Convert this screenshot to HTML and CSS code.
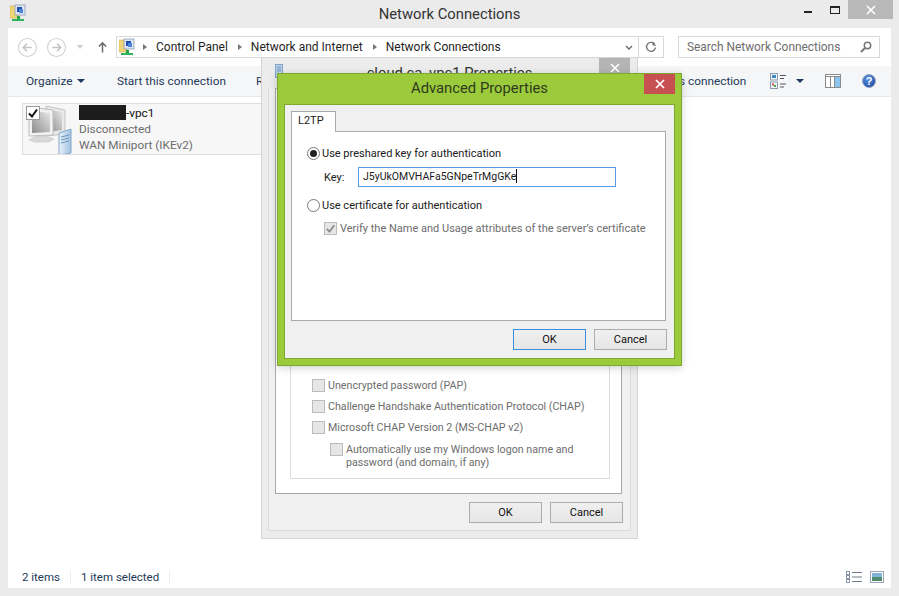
FILE: index.html
```html
<!DOCTYPE html>
<html lang="en">
<head>
<meta charset="utf-8">
<title>Network Connections</title>
<link rel="stylesheet" href="styles.css">
</head>
<body>
<svg class="defs" width="0" height="0" aria-hidden="true">
  <defs>
    <linearGradient id="screen" x1="0" y1="1" x2="1" y2="0"><stop offset="0" stop-color="#8c8c8c"/><stop offset="1" stop-color="#e8e8e8"/></linearGradient>
    <linearGradient id="server" x1="0" y1="0" x2="1" y2="0"><stop offset="0" stop-color="#eaf3fb"/><stop offset="1" stop-color="#9fc1e2"/></linearGradient>
    <radialGradient id="helpball" cx=".4" cy=".3" r=".8"><stop offset="0" stop-color="#5c93e6"/><stop offset="1" stop-color="#1d46a0"/></radialGradient>
    <symbol id="netfolder" viewBox="0 0 16 18">
      <path d="M0 2h5l1 1h2v11H0z" fill="#f1d675" stroke="#c9a94a" stroke-width=".6"/>
      <rect x="5" y="1" width="10" height="10" fill="#dfe6f3" stroke="#7f8fb0" stroke-width=".7"/>
      <rect x="7" y="3" width="5" height="5" fill="#1f4fa8"/>
      <rect x="9" y="5" width="4" height="4" fill="#4d87d8"/>
      <rect x="7" y="12" width="3" height="3" fill="#1fa34a"/>
      <rect x="2" y="15" width="12" height="2" fill="#2eb35a"/>
    </symbol>
    <symbol id="x" viewBox="0 0 10 10">
      <path d="M1 1l8 8M9 1l-8 8" stroke="currentColor" stroke-width="1.7" fill="none"/>
    </symbol>
    <symbol id="tick" viewBox="0 0 12 12">
      <path d="M2 6.5l3 3 5-7" stroke="currentColor" stroke-width="2" fill="none"/>
    </symbol>
  </defs>
</svg>

<div class="window">
  <header class="titlebar">
    <svg class="app-icon"><use href="#netfolder"/></svg>
    <h1 class="title">Network Connections</h1>
    <div class="caption">
      <span class="cap-min"></span>
      <span class="cap-max"></span>
      <span class="cap-close"><svg class="x-icon"><use href="#x"/></svg></span>
    </div>
  </header>

  <main class="client">
    <div class="addressrow">
      <span class="nav-btn"><svg viewBox="0 0 18 18"><circle cx="9" cy="9" r="8.5" fill="#fff" stroke="#cfcfcf"/><path d="M13 9H5M8.500 5.500L5 9l3.500 3.500" stroke="#c4c4c4" stroke-width="1.500" fill="none"/></svg></span>
      <span class="nav-btn"><svg viewBox="0 0 18 18"><circle cx="9" cy="9" r="8.500" fill="#fff" stroke="#cfcfcf"/><path d="M5 9h8M9.500 5.500L13 9l-3.500 3.500" stroke="#c4c4c4" stroke-width="1.500" fill="none"/></svg></span>
      <span class="nav-drop"></span>
      <span class="nav-up"><svg viewBox="0 0 10 12"><path d="M5 12V2M1 5.500L5 1.500l4 4" stroke="#6d6d6d" stroke-width="1.700" fill="none"/></svg></span>
      <div class="address">
        <svg class="addr-icon"><use href="#netfolder"/></svg>
        <span class="crumb-sep"></span><span class="crumb">Control Panel</span>
        <span class="crumb-sep"></span><span class="crumb">Network and Internet</span>
        <span class="crumb-sep"></span><span class="crumb">Network Connections</span>
        <span class="addr-chevron"><svg viewBox="0 0 8 6"><path d="M1 1l3 3 3-3" stroke="#666" stroke-width="1.400" fill="none"/></svg></span>
        <span class="addr-refresh"><svg viewBox="0 0 12 12"><path d="M9.700 3.200A4.500 4.500 0 1 0 10.500 6.500" stroke="#777" stroke-width="1.400" fill="none"/><path d="M7.500 0.500v4h4z" fill="#777" transform="rotate(10 9 3)"/></svg></span>
      </div>
      <div class="search">
        <span>Search Network Connections</span>
        <svg viewBox="0 0 12 12"><circle cx="7.500" cy="4.500" r="3.200" fill="none" stroke="#777" stroke-width="1.500"/><path d="M5 7l-4 4" stroke="#777" stroke-width="2"/></svg>
      </div>
    </div>

    <div class="toolbar">
      <span class="tool tool-org">Organize<i class="caret"></i></span>
      <span class="tool tool-start">Start this connection</span>
      <span class="tool tool-r">R</span>
      <span class="tool tool-conn">s connection</span>
      <span class="tool-icons">
        <svg class="ic-view" viewBox="0 0 16 16">
          <rect x=".5" y=".5" width="7" height="6.500" fill="#eef3f8" stroke="#8a9bb0"/><rect x="2" y="2" width="4" height="3" fill="#3b8ac4"/>
          <rect x=".5" y="9" width="7" height="6.500" fill="#eef3f8" stroke="#8a9bb0"/><rect x="2" y="10.500" width="2" height="2" fill="#d0453a"/><rect x="4" y="12" width="2" height="2" fill="#4aa64a"/>
          <path d="M10 2.500h6M10 5.500h4M10 11h6M10 14h4" stroke="#555" stroke-width="1"/>
        </svg>
        <i class="caret caret-view"></i>
        <svg class="ic-pane" viewBox="0 0 16 14"><rect x=".5" y=".5" width="15" height="13" fill="#fff" stroke="#8b8b8b"/><rect x="10" y="3" width="5" height="10" fill="#8cc4f0"/><path d="M1 2.500h14M5.500 3v10M9.500 3v10" stroke="#8b8b8b"/></svg>
        <svg class="ic-help" viewBox="0 0 14 14"><circle cx="7" cy="7" r="6.500" fill="url(#helpball)" stroke="#9aa7bd"/><text x="7" y="10.500" text-anchor="middle" class="help-q">?</text></svg>
      </span>
    </div>

    <div class="content">
      <article class="item">
        <span class="item-check"><svg><use href="#tick"/></svg></span>
        <svg class="item-icon" viewBox="0 0 50 50">
          <path d="M22 2l19 4v24l-19 2z" fill="#e9e9e9" stroke="#c4c4c4"/>
          <path d="M25 6l13 2v18l-13 2z" fill="url(#screen)"/>
          <path d="M5 3l24 3v25l-24 1z" fill="#f2f2f2" stroke="#bdbdbd"/>
          <path d="M8 7l18 2v19l-18 1z" fill="url(#screen)"/>
          <path d="M12 32h10l8 3-5 3H11l-6-2z" fill="#d8d8d8" stroke="#c6c6c6" stroke-width=".6"/>
          <path d="M35 29l12-4v24l-12 2z" fill="url(#server)" stroke="#82a6ca"/>
          <path d="M37 33l8-2M37 36l8-2M37 39l8-2" stroke="#6e94bb"/>
        </svg>
        <div class="item-text">
          <div class="item-name"><span class="redact"></span>-vpc1</div>
          <div class="item-sub">Disconnected</div>
          <div class="item-sub">WAN Miniport (IKEv2)</div>
        </div>
      </article>
    </div>

    <footer class="statusbar">
      <span class="status">2 items</span>
      <span class="status">1 item selected</span>
      <span class="status-icons">
        <svg viewBox="0 0 16 12"><path d="M6 1.500h10M6 6h10M6 10.500h10" stroke="#6f7d8c"/><rect x=".5" y=".5" width="3" height="3" fill="#fff" stroke="#8a97a6"/><rect x=".5" y="4.500" width="3" height="3" fill="#fff" stroke="#8a97a6"/><rect x=".5" y="8.500" width="3" height="3" fill="#fff" stroke="#8a97a6"/></svg>
        <svg viewBox="0 0 14 12"><rect x=".5" y=".5" width="13" height="11" fill="#fff" stroke="#9aa5b3"/><rect x="2" y="2" width="10" height="8" fill="#7fb4d6"/><rect x="2" y="6" width="10" height="4" fill="#4f8a6a"/></svg>
      </span>
    </footer>
  </main>
</div>

<section class="dlg-back">
  <div class="back-title">
    <svg class="back-icon" viewBox="0 0 8 14"><rect x=".5" y=".5" width="7" height="13" fill="#bcd3ea" stroke="#7fa3c7"/><path d="M2 3h4M2 5h4M2 7h4" stroke="#6e94bb"/></svg>
    <span class="back-name">cloud ca_vpc1 Properties</span>
    <span class="back-close"><svg class="x-icon"><use href="#x"/></svg></span>
  </div>
  <div class="back-body">
    <div class="back-panel">
      <div class="groupbox">
        <label class="opt"><span class="chk"></span><span>Unencrypted password (PAP)</span></label>
        <label class="opt"><span class="chk"></span><span>Challenge Handshake Authentication Protocol (CHAP)</span></label>
        <label class="opt"><span class="chk"></span><span>Microsoft CHAP Version 2 (MS-CHAP v2)</span></label>
        <label class="opt opt-sub"><span class="chk"></span><span>Automatically use my Windows logon name and<br>password (and domain, if any)</span></label>
      </div>
    </div>
    <div class="btnrow back-btns">
      <button class="btn" type="button">OK</button>
      <button class="btn" type="button">Cancel</button>
    </div>
  </div>
</section>

<section class="dlg-front">
  <div class="front-title">
    <h2 class="front-name">Advanced Properties</h2>
    <span class="front-close"><svg class="x-icon"><use href="#x"/></svg></span>
  </div>
  <div class="front-body">
    <div class="tabstrip"><span class="tab">L2TP</span></div>
    <div class="tabpanel">
      <div class="radio-row"><span class="radio on"></span><span>Use preshared key for authentication</span></div>
      <div class="key-row"><span class="key-label">Key:</span><div class="key-input">J5yUkOMVHAFa5GNpeTrMgGKe<i class="cursor"></i></div></div>
      <div class="radio-row radio-row2"><span class="radio"></span><span>Use certificate for authentication</span></div>
      <div class="verify-row"><span class="chk chk-on"><svg><use href="#tick"/></svg></span><span>Verify the Name and Usage attributes of the server’s certificate</span></div>
    </div>
    <div class="btnrow front-btns">
      <button class="btn btn-default" type="button">OK</button>
      <button class="btn" type="button">Cancel</button>
    </div>
  </div>
</section>
</body>
</html>
```

FILE: styles.css
```css
* { box-sizing: border-box; }
html, body { margin: 0; height: 100%; }
body {
  width: 899px; height: 596px; overflow: hidden; position: relative;
  font-family: Roboto, "Open Sans", "Liberation Sans", sans-serif;
  font-size: 11.800px; color: #1a1a1a; background: #ebebeb;
}
.defs { position: absolute; }
.x-icon { width: 10px; height: 10px; color: #fff; display: block; }

.window { width: 899px; height: 596px; display: flex; flex-direction: column; padding: 0 8px 8px; }
.titlebar { height: 28px; flex: none; display: flex; align-items: center; position: relative; }
.app-icon { width: 16px; height: 18px; position: absolute; left: 2px; top: 4px; }
.title { flex: 1; margin: 0; text-align: center; font-size: 14.800px; font-weight: 400; color: #333; line-height: 28px; }
.caption { position: absolute; right: -8px; top: 0; display: flex; align-items: flex-start; }
.cap-min { width: 8px; height: 2px; background: #222; margin: 11px 18px 0 0; }
.cap-max { width: 10px; height: 8px; border: 1px solid #222; border-top-width: 2px; margin: 6px 8px 0 0; }
.cap-close { width: 45px; height: 19px; background: #b9b9b9; margin-right: 6px; display: flex; align-items: center; justify-content: center; }

.client { flex: 1; min-height: 0; background: #fff; display: flex; flex-direction: column; }
.addressrow { height: 38px; flex: none; display: flex; align-items: center; padding: 0 10px; position: relative; }
.nav-btn { width: 19px; height: 19px; margin-right: 10px; display: block; }
.nav-btn svg { width: 19px; height: 19px; display: block; }
.nav-drop { width: 0; height: 0; border: 3.500px solid transparent; border-top: 4px solid #ccc; border-bottom: 0; margin: 0 14px 0 1px; }
.nav-up { width: 9px; height: 12px; margin: 0 9px 0 1px; }
.nav-up svg { width: 9px; height: 12px; display: block; }
.address { width: 548px; height: 22px; border: 1px solid #d9d9d9; display: flex; align-items: center; padding-left: 2px; color: #1f1f1f; position: relative; font-size: 12px; }
.addr-icon { width: 16px; height: 18px; margin-right: 8px; }
.crumb-sep { width: 0; height: 0; border: 3.500px solid transparent; border-left: 4px solid #777; border-right: 0; margin-right: 9px; }
.crumb { margin-right: 10px; white-space: nowrap; }
.addr-chevron { position: absolute; right: 30px; top: 8px; width: 8px; height: 6px; }
.addr-chevron svg { display: block; width: 8px; height: 6px; }
.addr-refresh { position: absolute; right: -1px; top: -1px; width: 26px; height: 22px; border: 1px solid #d9d9d9; display: flex; align-items: center; justify-content: center; }
.addr-refresh svg { width: 12px; height: 12px; }
.search { position: absolute; left: 670px; top: 8px; width: 202px; height: 22px; border: 1px solid #d9d9d9; display: flex; align-items: center; justify-content: space-between; padding: 0 7px 0 8px; color: #6d6d6d; font-size: 11.900px; }
.search svg { width: 12px; height: 12px; }

.toolbar { height: 31px; flex: none; background: #f5f6f7; border-bottom: 1px solid #e7e8ea; display: flex; align-items: center; position: relative; color: #1e395b; }
.tool { position: absolute; top: 8px; white-space: nowrap; }
.tool-org { left: 18px; }
.tool-start { left: 109px; }
.tool-r { left: 248px; }
.tool-conn { left: 671px; }
.caret { display: inline-block; width: 0; height: 0; border: 4px solid transparent; border-top: 4px solid #1e395b; border-bottom: 0; margin-left: 5px; vertical-align: 2px; }
.tool-icons { position: absolute; left: 762px; top: 0; height: 30px; display: flex; align-items: center; }
.ic-view { width: 16px; height: 16px; }
.caret-view { margin: 0 0 0 10px; }
.ic-pane { width: 16px; height: 14px; margin-left: 21px; }
.ic-help { width: 14px; height: 14px; margin-left: 21px; }
.help-q { fill: #fff; font-size: 11px; font-weight: 700; font-family: "Liberation Sans", sans-serif; }

.content { flex: 1; min-height: 0; padding: 6px 14px; position: relative; }
.item { width: 360px; height: 52px; background: #f7f7f7; border: 1px solid #dedede; position: relative; display: flex; }
.item-check { position: absolute; left: 3px; top: 2px; width: 14px; height: 14px; border: 1px solid #9a9a9a; background: #fff; color: #111; z-index: 1; }
.item-check svg { display: block; width: 12px; height: 12px; }
.item-icon { width: 50px; height: 50px; flex: none; margin: 0 5px 0 1px; }
.item-text { line-height: 16px; padding-top: 1px; white-space: nowrap; }
.item-name { color: #111; }
.item-sub { color: #6d6d6d; }
.redact { display: inline-block; width: 47px; height: 15px; background: #1c1c1c; vertical-align: -3px; }

.statusbar { height: 22px; flex: none; display: flex; align-items: center; color: #1e395b; padding-left: 14px; position: relative; font-size: 11.500px; }
.status { padding-right: 10px; margin-right: 10px; border-right: 1px solid #f0f0f0; line-height: 14px; }
.status-icons { position: absolute; right: 6px; top: 5px; display: flex; gap: 7px; }
.status-icons svg { width: 16px; height: 12px; display: block; }

.dlg-back { position: absolute; left: 261px; top: 57px; width: 377px; height: 482px; background: #ececec; border: 1px solid #d4d4d4; display: flex; flex-direction: column; }
.back-title { height: 30px; flex: none; position: relative; text-align: center; line-height: 30px; font-size: 14.800px; color: #333; }
.back-icon { position: absolute; left: 13px; top: 6px; width: 8px; height: 14px; }
.back-close { position: absolute; right: 7px; top: 0; width: 31px; height: 19px; background: #b4b4b4; display: flex; align-items: center; justify-content: center; }
.back-body { flex: 1; min-height: 0; margin: 0 6px 7px 6px; border: 1px solid #dcdcdc; border-top: 0; display: flex; flex-direction: column; padding: 0 8px 0 6px; background: #f0f0f0; font-size: 11px; }
.back-panel { height: 406px; border: 1px solid #a9a9a9; background: #fff; padding: 0 11px 0 14px; flex: none; }
.groupbox { height: 390px; border: 1px solid #dcdcdc; display: flex; flex-direction: column; justify-content: flex-end; padding: 0 0 5px 21px; color: #6d6d6d; font-size: 10.700px; }
.opt { display: flex; align-items: flex-start; gap: 3px; min-height: 21px; line-height: 13px; white-space: nowrap; }
.opt-sub { margin: 1px 0 0 18px; height: 30px; }
.chk { width: 13px; height: 13px; flex: none; background: #e6e6e6; border: 1px solid #bcbcbc; color: #8a8a8a; display: block; }
.chk svg { display: block; width: 11px; height: 11px; }
.btnrow { display: flex; justify-content: flex-end; gap: 8px; }
.back-btns { padding-top: 8px; margin-right: -1px; }
.btn { width: 73px; height: 21px; padding: 0; border: 1px solid #acacac; background: linear-gradient(#f0f0f0, #e5e5e5); font: inherit; color: #111; }
.btn-default { border-color: #3c8fdc; }

.dlg-front { position: absolute; left: 277px; top: 73px; width: 405px; height: 293px; background: #9bcb3b; border: 1px solid #7da82e; box-shadow: 0 2px 8px rgba(0,0,0,.18); display: flex; flex-direction: column; padding: 0 6px 6px; font-size: 11px; }
.front-title { height: 30px; flex: none; position: relative; text-align: center; }
.front-name { margin: 0; font-size: 14.800px; font-weight: 400; color: #2f3a1e; line-height: 29px; }
.front-close { position: absolute; right: 0; top: 0; width: 31px; height: 20px; background: #c75050; display: flex; align-items: center; justify-content: center; }
.front-body { flex: 1; min-height: 0; background: #f0f0f0; border: 1px solid #7da82e; padding: 6px 8px 0 6px; display: flex; flex-direction: column; }
.tabstrip { height: 21px; flex: none; display: flex; position: relative; z-index: 1; margin-bottom: -1px; }
.tab { width: 45px; height: 21px; background: #fff; border: 1px solid #a9a9a9; border-bottom: 0; padding: 2px 0 0 6px; color: #1a1a1a; }
.tabpanel { height: 190px; flex: none; border: 1px solid #a9a9a9; background: #fff; padding: 14px 15px 0; }
.radio-row { display: flex; align-items: center; gap: 2px; height: 15px; }
.radio-row2 { margin-top: 11px; }
.radio { width: 13px; height: 13px; border-radius: 50%; border: 1px solid #777; background: #fff; position: relative; flex: none; }
.radio.on::after { content: ""; position: absolute; left: 2px; top: 2px; width: 7px; height: 7px; border-radius: 50%; background: #222; }
.key-row { display: flex; align-items: center; margin: 6px 0 0 17px; height: 20px; }
.key-label { width: 34px; }
.key-input { width: 258px; height: 20px; border: 1px solid #569de5; padding-left: 4px; line-height: 17px; white-space: nowrap; font-size: 10.500px; }
.cursor { display: inline-block; width: 1px; height: 14px; background: #111; vertical-align: -3px; }
.verify-row { display: flex; gap: 3px; align-items: center; margin: 8px 0 0 17px; color: #6d6d6d; white-space: nowrap; height: 15px; }
.chk-on { background: #e6e6e6; }
.front-btns { padding-top: 8px; margin-right: -1px; }
```
